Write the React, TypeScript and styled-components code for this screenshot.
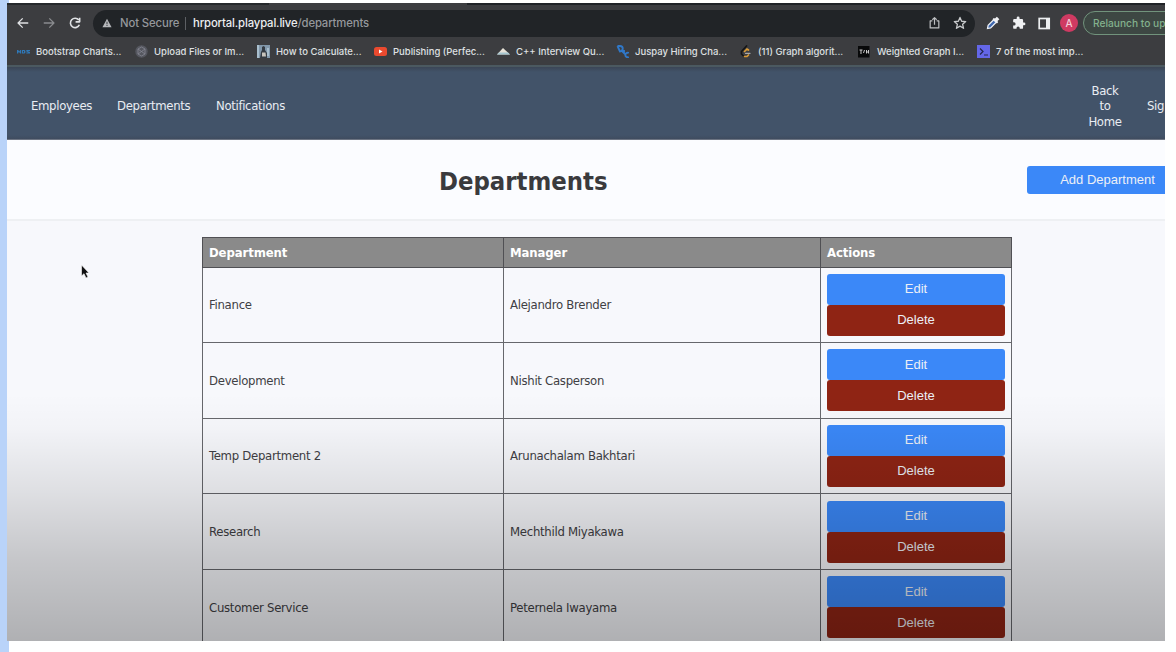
import React from "react";
import styled, { createGlobalStyle } from "styled-components";

const Global = createGlobalStyle`
  * { box-sizing: border-box; }
  body { margin: 0; background: #fff; overflow: hidden; }
`;

const sans = `Inter, "Liberation Sans", sans-serif`;
const tahoma = `"DejaVu Sans Condensed", "DejaVu Sans", sans-serif`;

const Page = styled.div`
  width: 1176px;
  height: 652px;
  padding: 3px 11px 11px 7px;
  background: linear-gradient(to right, #b9d3f9 9px, #fff 9px);
`;

const Screen = styled.div`
  position: relative;
  display: flex;
  flex-direction: column;
  width: 1158px;
  height: 638px;
  overflow: hidden;
  background: #f7f8fc;
`;

const Shade = styled.div`
  position: absolute;
  inset: 390px 0 0 0;
  pointer-events: none;
  background: linear-gradient(to bottom, rgba(0,0,0,0) 0%, rgba(0,0,0,0.02) 14%, rgba(0,0,0,0.1) 40%, rgba(0,0,0,0.2) 67%, rgba(0,0,0,0.29) 100%);
`;

const TabStrip = styled.div`
  flex: none;
  height: 2px;
  background: linear-gradient(to right, #25282b 262px, #3c3d40 262px, #3c3d40 460px, #202327 460px);
`;

const Toolbar = styled.div`
  flex: none;
  display: flex;
  align-items: center;
  height: 35px;
  padding: 1px 0 0 9px;
  background: #3c3d40;
  white-space: nowrap;
`;

const NavIcons = styled.div`
  flex: none;
  display: flex;
  gap: 12px;
  width: 77px;
`;

const AddressBar = styled.div`
  flex: none;
  display: flex;
  align-items: center;
  width: 882px;
  height: 27px;
  padding: 0 8px 0 9px;
  border-radius: 14px;
  background: #212427;
  font: 500 11.3px ${sans};
  color: #95989c;
`;

const Security = styled.span`
  margin-left: 8px;
  width: 65px;
  letter-spacing: -0.1px;
`;

const Divider = styled.span`
  width: 1px;
  height: 13px;
  margin-right: 7px;
  background: #5d6064;
`;

const Url = styled.span`
  flex: 1;
  letter-spacing: -0.13px;
  b { font-weight: 500; color: #eceef0; }
`;

const BarIcons = styled.div`
  display: flex;
  gap: 12px;
`;

const Extensions = styled.div`
  flex: none;
  display: flex;
  align-items: center;
  gap: 12px;
  margin-left: 10px;
`;

const Avatar = styled.span`
  display: grid;
  place-items: center;
  width: 18px;
  height: 18px;
  margin-left: -3px;
  border-radius: 50%;
  background: #cf3a62;
  color: #f3cdd8;
  font: 500 10px ${sans};
`;

const Relaunch = styled.span`
  flex: none;
  width: 130px;
  height: 24px;
  margin-left: 5px;
  padding-left: 9px;
  border: 1px solid #71937c;
  border-radius: 12px;
  background: #3d4743;
  color: #83b18d;
  font: 500 10.2px/22px ${sans};
  letter-spacing: 0;
`;

const Bookmarks = styled.div`
  flex: none;
  display: flex;
  align-items: center;
  height: 25px;
  padding: 0 0 3px 10px;
  background: #3c3d40;
`;

const Bookmark = styled.div<{ $w: number }>`
  flex: none;
  display: flex;
  align-items: center;
  gap: 6px;
  width: ${(p) => p.$w}px;
  white-space: nowrap;
  color: #dfe0e2;
  font: 500 9.5px ${sans};
`;

const Header = styled.header`
  flex: none;
  display: flex;
  align-items: center;
  height: 75px;
  padding: 6px 0 0 24px;
  border-top: 2px solid #4b5960;
  border-bottom: 1px solid #6c7482;
  background: linear-gradient(to bottom, #3b4656 0, #425369 5px, #425369 68px, #3f4c5f 100%);
`;

const HeaderLink = styled.a<{ $w: number }>`
  flex: none;
  width: ${(p) => p.$w}px;
  white-space: nowrap;
  color: #e9edf3;
  font: 13px/15.6px ${tahoma};
  letter-spacing: -0.33px;
`;

const StackedLink = styled(HeaderLink)`
  margin: 0 24px 0 auto;
  white-space: normal;
  text-align: center;
`;

const TitleBar = styled.div`
  flex: none;
  display: flex;
  align-items: center;
  height: 81px;
  padding-left: 432px;
  background: #fbfcff;
  border-bottom: 2px solid #eef0f3;
`;

const Title = styled.h1`
  flex: none;
  margin: 3px 0 0;
  width: 588px;
  color: #3a3a3d;
  font: bold 25.4px ${tahoma};
`;

const Button = styled.button<{ $bg: string; $h: number }>`
  display: block;
  width: 100%;
  height: ${(p) => p.$h}px;
  padding: 0 0 1px;
  border: 0;
  border-radius: 3px;
  background: ${(p) => p.$bg};
  color: #eceff6;
  font: 13px "Liberation Sans", sans-serif;
`;

const AddSlot = styled.div`
  flex: none;
  width: 161px;
  margin-top: 1px;
`;

const Table = styled.table`
  width: 810px;
  margin: 16px 0 0 195px;
  border-collapse: collapse;
  table-layout: fixed;
  color: #3f4044;
  font: 13px ${tahoma};
`;

const Th = styled.th<{ $w: number }>`
  width: ${(p) => p.$w}px;
  height: 29.5px;
  padding: 0 6px;
  border: 1px solid #505054;
  background: #8a8a8a;
  color: #fff;
  text-align: left;
  font-size: 13px;
  letter-spacing: -0.1px;
`;

const Td = styled.td`
  height: 75.6px;
  padding: 0 6px;
  border: 1px solid #66676c;
  letter-spacing: -0.28px;
`;

const Pointer = styled.svg`
  position: absolute;
  left: 73px;
  top: 261px;
`;

const Stroke = ({ d, size = 14, color = "#dfe1e4", w = 2.2 }: { d: string; size?: number; color?: string; w?: number }) => (
  <svg width={size} height={size} viewBox="0 0 24 24" fill="none" stroke={color} strokeWidth={w} strokeLinejoin="round">
    <path d={d} />
  </svg>
);

const Solid = ({ d, size = 14, color = "#dfe1e4" }: { d: string; size?: number; color?: string }) => (
  <svg width={size} height={size} viewBox="0 0 24 24" fill={color}>
    <path d={d} />
  </svg>
);

const Fav = ({ children }: { children: React.ReactNode }) => (
  <svg width="13" height="13" viewBox="0 0 13 13">{children}</svg>
);

const bookmarks = [
  { w: 118, label: "Bootstrap Charts...", icon: <g fill="#2f78b7"><path d="M0 5h1.2l1 1.5 1-1.5h1v3.400H3V7l-.8 1L1.200 7v1.400H0zM5 5h2.500l1 1-.2 2-1 .4H5zm1 1v1.500h1V6zM9.300 5H13v1h-2.500l2.500 1v1.400H9.300V7.500h2l-2-1z" /></g> },
  { w: 122, label: "Upload Files or Im...", icon: <><circle cx="6.500" cy="6.500" r="6.200" fill="#55575f" /><path d="M3 4l3.500-2L10 4v5l-3.500 2L3 9zM3 4l7 5M10 4L3 9" fill="none" stroke="#858792" strokeWidth=".8" /></> },
  { w: 117, label: "How to Calculate...", icon: <><path d="M0 0h13v13H0z" fill="#8298ab" /><path d="M0 0h2v13H0zM10 3h2v8h-2z" fill="#a9bfce" /><path d="M3 13l1-6 1-2V2l1.500-1L8 2v3l2 3v5z" fill="#343b43" /><path d="M5 7.500h3.500l.5 4H5z" fill="#c8c4bc" /></> },
  { w: 123, label: "Publishing (Perfec...", icon: <><rect y="2" width="13" height="9" rx="2.500" fill="#ea4a2f" /><path d="M5 4.500v4l3.500-2z" fill="#fff" /></> },
  { w: 119, label: "C++ Interview Qu...", icon: <><path d="M0 9.500l6-6.500 7 6.500z" fill="#e8e3d8" /><path d="M0 9.500l2-2h9l2 2z" fill="#a5c6d0" /></> },
  { w: 123, label: "Juspay Hiring Cha...", icon: <g fill="none" stroke="#3078c8" strokeWidth="1.900"><path d="M1.500 1h2.500a2.500 2.500 0 0 1 0 5.500L1.500 1M5 5l4 4M8 5v3M12.800 8a2.300 2.300 0 1 0 0 4" /></g> },
  { w: 119, label: "(11) Graph algorit...", icon: <g fill="none" strokeWidth="1.700" strokeLinecap="round"><path d="M7.500 1L2.500 6.500v2.500L5 11.500" stroke="#151515" /><path d="M9.500 5L8 4 5.500 6.500M5.500 11.500h2.500l1.500-1.500" stroke="#d99a36" /><path d="M6.500 8.300h4.500" stroke="#a8a8a8" strokeWidth="1.300" /></g> },
  { w: 119, label: "Weighted Graph I...", icon: <><path d="M0 1h11.500v11.500H0z" fill="#08090a" /><path d="M1.500 5h3M3 5v4M6.500 5L5.500 8M8.500 5v3.500M10.500 5v3.500M8.500 7h2" stroke="#ddd" fill="none" strokeWidth=".9" /></> },
  { w: 130, label: "7 of the most imp...", icon: <><path d="M0 0h13v13H0z" fill="#6467e8" /><path d="M3 3.500l3 3-3 3M7 10h4" stroke="#24264f" strokeWidth="1.200" fill="none" /></> },
];

const rows = [
  ["Finance", "Alejandro Brender"],
  ["Development", "Nishit Casperson"],
  ["Temp Department 2", "Arunachalam Bakhtari"],
  ["Research", "Mechthild Miyakawa"],
  ["Customer Service", "Peternela Iwayama"],
];

export default function App() {
  return (
    <Page>
      <Global />
      <Screen>
        <TabStrip />
        <Toolbar>
          <NavIcons>
            <Stroke d="M21 12H4M11.500 4l-8 8 8 8" />
            <Stroke d="M3 12h17M12.500 4l8 8-8 8" color="#898b8e" />
            <Stroke d="M18.500 7A8 8 0 1 0 19.500 15M20 3v7h-7" w={2.8} />
          </NavIcons>
          <AddressBar>
            <Solid d="M12 2L1 22h22zM11 9h2v6h-2zM11 17h2v2h-2z" size={10} color="#b5b7ba" />
            <Security>Not Secure</Security>
            <Divider />
            <Url><b>hrportal.playpal.live</b>/departments</Url>
            <BarIcons>
              <Stroke d="M8 9H4v13h16V9h-4M12 16V3M8 7l4-4 4 4" size={13} color="#bfc1c3" />
              <Stroke d="M12 2.500l2.800 6.500 7 .6-5.300 4.600 1.600 6.900-6.100-3.700-6.100 3.700 1.600-6.900L2.200 9.600l7-.6z" size={14} color="#c8cacc" />
            </BarIcons>
          </AddressBar>
          <Extensions>
            <svg width="15" height="15" viewBox="0 0 24 24"><path d="M4 20l1-5 9-9 4 4-9 9z" fill="#3e67ae" stroke="#eef1f7" strokeWidth="2" /><path d="M12 5l2-2 2 1 3-3 4 4-3 3 1 2-2 2z" fill="#f1f2f5" /></svg>
            <Solid d="M20.500 11H19V7a2 2 0 0 0-2-2h-4V3.500a2.500 2.500 0 0 0-5 0V5H4a2 2 0 0 0-2 2v3.800h1.500a2.700 2.700 0 0 1 0 5.400H2V20a2 2 0 0 0 2 2h3.800v-1.500a2.700 2.700 0 0 1 5.400 0V22H17a2 2 0 0 0 2-2v-4h1.500a2.500 2.500 0 0 0 0-5z" color="#f0f1f3" />
            <svg width="13" height="13" viewBox="0 0 13 13"><rect x="1.200" y="1.500" width="10" height="10" fill="none" stroke="#eceef0" strokeWidth="1.700" /><path d="M8 1.500h3.500v10H8z" fill="#eceef0" /></svg>
            <Avatar>A</Avatar>
          </Extensions>
          <Relaunch>Relaunch to up</Relaunch>
        </Toolbar>
        <Bookmarks>
          {bookmarks.map((b) => (
            <Bookmark key={b.label} $w={b.w}>
              <Fav>{b.icon}</Fav>
              {b.label}
            </Bookmark>
          ))}
        </Bookmarks>
        <Header>
          <HeaderLink $w={86}>Employees</HeaderLink>
          <HeaderLink $w={99}>Departments</HeaderLink>
          <HeaderLink $w={80}>Notifications</HeaderLink>
          <StackedLink $w={36}>Back to Home</StackedLink>
          <HeaderLink $w={18}>Sig</HeaderLink>
        </Header>
        <TitleBar>
          <Title>Departments</Title>
          <AddSlot><Button $bg="#3b88f8" $h={28}>Add Department</Button></AddSlot>
        </TitleBar>
        <Table>
          <thead>
            <tr><Th $w={301}>Department</Th><Th $w={317}>Manager</Th><Th $w={191}>Actions</Th></tr>
          </thead>
          <tbody>
            {rows.map(([dept, manager]) => (
              <tr key={dept}>
                <Td>{dept}</Td>
                <Td>{manager}</Td>
                <Td>
                  <Button $bg="#3b88f8" $h={31}>Edit</Button>
                  <Button $bg="#8f2414" $h={31}>Delete</Button>
                </Td>
              </tr>
            ))}
          </tbody>
        </Table>
        <Shade />
        <Pointer width="11" height="16" viewBox="0 0 11 16"><path d="M1.500 1v11l2.500-2.300L6 14l2-1-2-4h3z" fill="#101012" stroke="#fff" strokeWidth=".6" /></Pointer>
      </Screen>
    </Page>
  );
}
